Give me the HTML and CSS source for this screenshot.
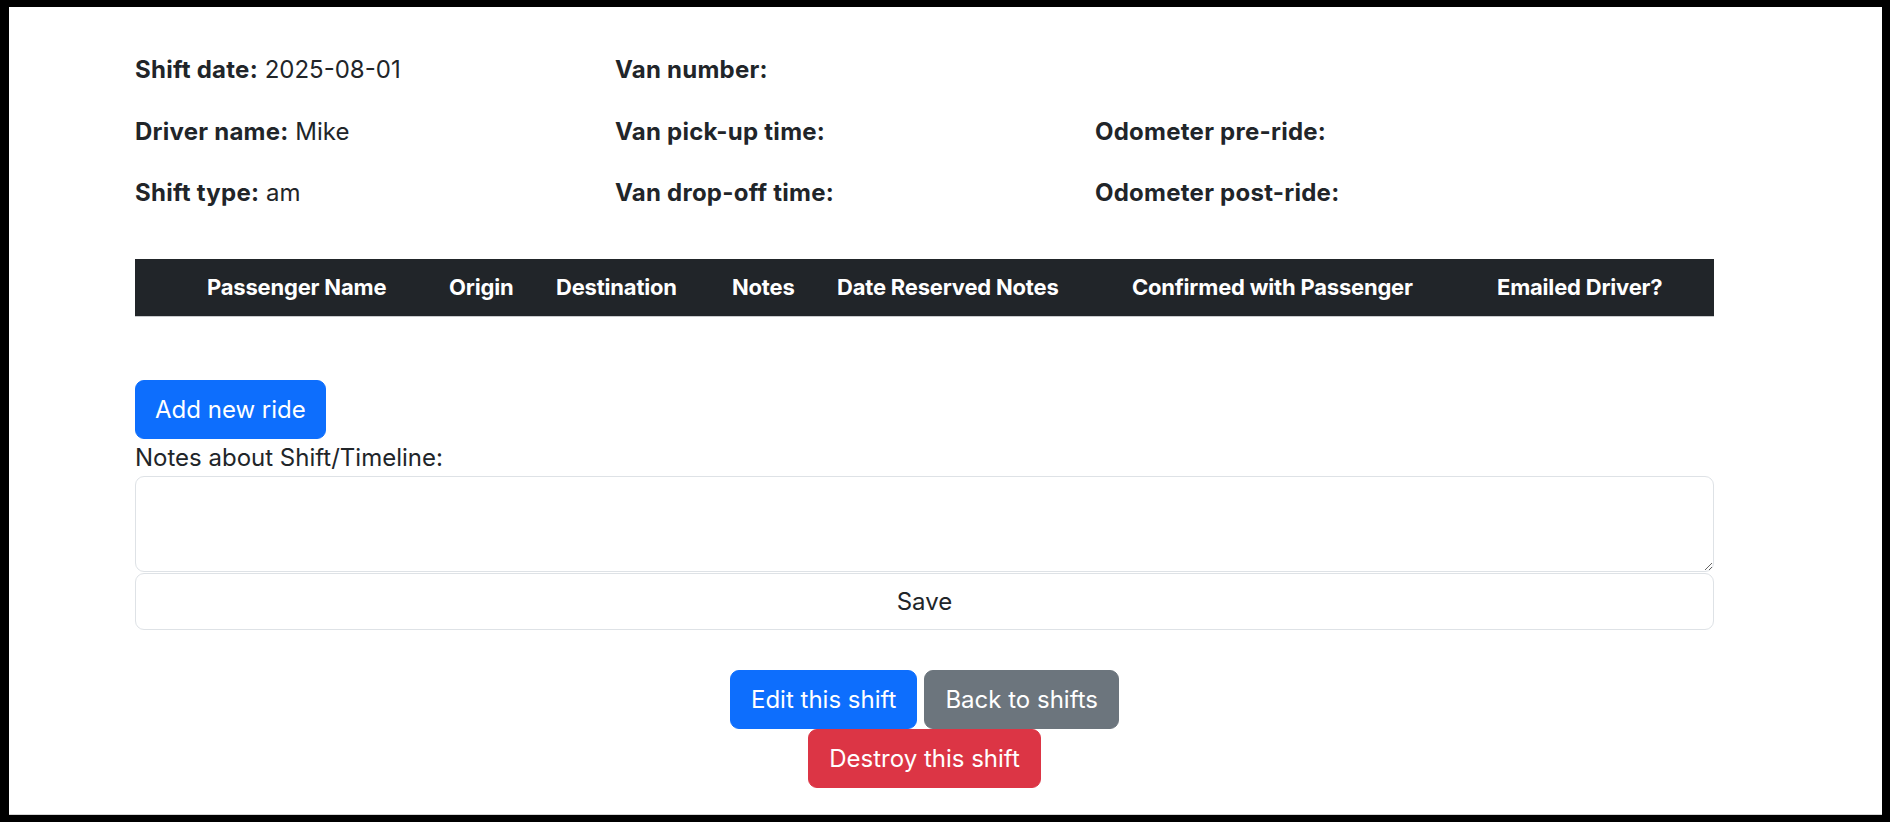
FILE: index.html
```html
<!DOCTYPE html>
<html lang="en">
<head>
<meta charset="utf-8">
<title>Shift</title>
<link rel="stylesheet" href="styles.css">
</head>
<body>
<div class="frame">
  <main class="container">
    <div class="info">
      <p><strong>Shift date:</strong> 2025-08-01</p>
      <p><strong>Van number:</strong></p>
      <p></p>
      <p><strong>Driver name:</strong> Mike</p>
      <p><strong>Van pick-up time:</strong></p>
      <p><strong>Odometer pre-ride:</strong></p>
      <p><strong>Shift type:</strong> am</p>
      <p><strong>Van drop-off time:</strong></p>
      <p><strong>Odometer post-ride:</strong></p>
    </div>

    <table class="rides">
      <colgroup>
        <col class="c0"><col class="c1"><col class="c2"><col class="c3"><col class="c4"><col class="c5"><col class="c6"><col class="c7">
      </colgroup>
      <thead>
        <tr>
          <th></th>
          <th>Passenger Name</th>
          <th>Origin</th>
          <th>Destination</th>
          <th>Notes</th>
          <th>Date Reserved Notes</th>
          <th>Confirmed with Passenger</th>
          <th>Emailed Driver?</th>
        </tr>
      </thead>
    </table>

    <div class="add-row">
      <a class="btn btn-primary" href="#">Add new ride</a>
    </div>

    <form class="notes">
      <label class="notes-label" for="notes">Notes about Shift/Timeline:</label>
      <textarea id="notes" class="notes-input"></textarea>
      <button type="button" class="save">Save</button>
    </form>

    <div class="actions">
      <div class="action-row">
        <a class="btn btn-primary btn-act" href="#">Edit this shift</a>
        <a class="btn btn-secondary btn-act" href="#">Back to shifts</a>
      </div>
      <div class="action-row">
        <button type="button" class="btn btn-danger btn-act">Destroy this shift</button>
      </div>
    </div>
  </main>
</div>
</body>
</html>
```

FILE: styles.css
```css
html, body {
  margin: 0;
  height: 100%;
}

body {
  background: #000;
  font-family: Inter, "Liberation Sans", "DejaVu Sans", sans-serif;
  color: #212529;
  overflow: hidden;
}

.frame {
  background: #fff;
  margin: 7px 8px 0 9px;
  height: 808px;
  box-sizing: border-box;
  padding: 44px 0 0 126px;
  border-bottom: 1px solid #d6d6d6;
}

.container {
  width: 1579px;
  font-size: 24px;
  line-height: 37px;
}

.info {
  display: grid;
  grid-template-columns: 480px 480px 1fr;
  row-gap: 24.5px;
}

.info p {
  margin: 0;
  min-height: 37px;
}

.info strong {
  font-weight: 700;
  letter-spacing: 0.25px;
}

.rides {
  margin-top: 48px;
  width: 100%;
  border-collapse: collapse;
  table-layout: fixed;
}

.c0 { width: 60px; }
.c1 { width: 242px; }
.c2 { width: 107px; }
.c3 { width: 176px; }
.c4 { width: 105px; }
.c5 { width: 295px; }
.c6 { width: 365px; }
.c7 { width: 229px; }

.rides th {
  background: #212529;
  color: #fff;
  font-size: 22px;
  font-weight: 700;
  letter-spacing: -0.2px;
  text-align: left;
  padding: 10px 0 10px 12px;
  line-height: 37px;
  border-bottom: 1px solid #c9cbcd;
  white-space: nowrap;
}

.add-row {
  display: flex;
  margin-top: 63px;
}

.btn {
  display: inline-block;
  box-sizing: border-box;
  font: inherit;
  line-height: 36px;
  padding: 10.5px 19px;
  border: 1px solid transparent;
  border-radius: 9px;
  color: #fff;
  text-decoration: none;
  cursor: pointer;
}

.btn-primary {
  background: #0d6efd;
  border-color: #0d6efd;
}

.btn-secondary {
  background: #6c757d;
  border-color: #6c757d;
}

.btn-danger {
  background: #dc3545;
  border-color: #dc3545;
}

.notes {
  margin: 0;
}

.notes-label {
  display: block;
  line-height: 37px;
}

.notes-input {
  display: block;
  width: 100%;
  height: 96px;
  box-sizing: border-box;
  margin: 0;
  border: 1px solid #dee2e6;
  border-radius: 9px;
  font: inherit;
  resize: vertical;
  padding: 9px 18px;
}

.save {
  display: block;
  width: 100%;
  height: 57px;
  box-sizing: border-box;
  margin-top: 1px;
  background: #fff;
  border: 1px solid #dee2e6;
  border-radius: 9px;
  color: #212529;
  font: inherit;
  line-height: 36px;
}

.actions {
  margin-top: 40px;
  display: flex;
  flex-direction: column;
}

.action-row {
  display: flex;
  justify-content: center;
  gap: 7px;
}

.btn-act {
  padding: 10.5px 20px;
}
```
